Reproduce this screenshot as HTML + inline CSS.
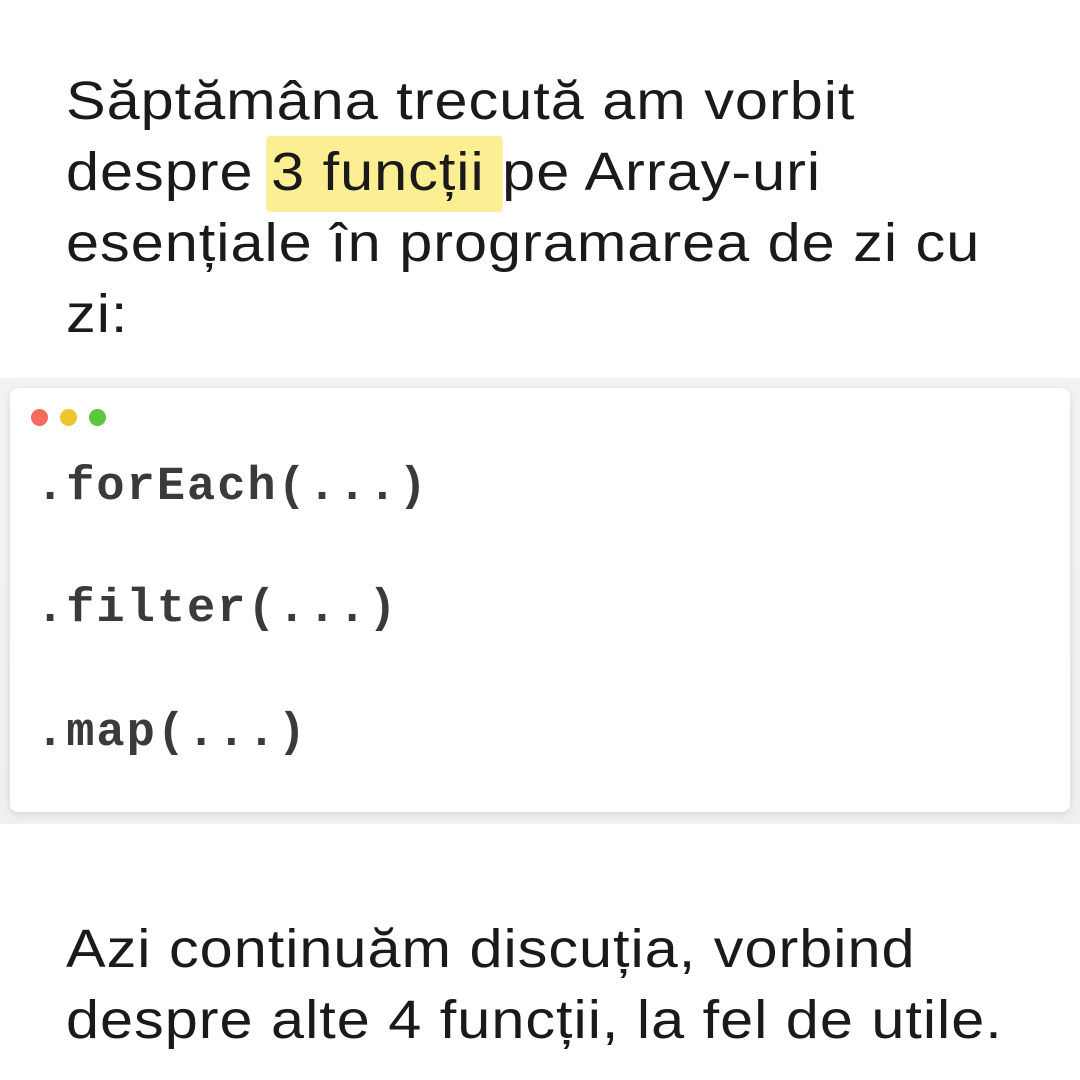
<!DOCTYPE html>
<html><head><meta charset="utf-8"><style>
html,body{margin:0;padding:0;background:#fff;}
body{width:1080px;height:1080px;position:relative;overflow:hidden;font-family:"Liberation Sans",sans-serif;color:#1a1a1a;}
.t{position:absolute;left:66px;font-size:54px;line-height:71px;letter-spacing:0.9px;transform:scaleX(1.1);transform-origin:0 0;white-space:nowrap;}
.hl{background:#fbee93;border-radius:4px;padding:6px 0 10px 4px;margin-left:-4px;}
.band{position:absolute;left:0;top:378px;width:1080px;height:446px;background:linear-gradient(#f3f3f3,#f0f0f0);}
.card{position:absolute;left:10px;top:388px;width:1060px;height:424px;background:#fff;border-radius:8px;box-shadow:0 2px 8px rgba(0,0,0,0.12);}
.dot{position:absolute;top:409px;width:17px;height:17px;border-radius:50%;}
.code{position:absolute;left:36px;font-family:"Liberation Mono",monospace;font-weight:bold;font-size:47px;color:#3a3a3a;letter-spacing:2px;}
</style></head><body>
<div class="t" style="top:66px">Săptămâna trecută am vorbit<br>despre <span class="hl">3 funcții </span>pe Array-uri<br>esențiale în programarea de zi cu<br>zi:</div>
<div class="band"></div>
<div class="card"></div>
<div class="dot" style="left:31px;background:#f76a5c"></div>
<div class="dot" style="left:60px;background:#eec530"></div>
<div class="dot" style="left:89px;background:#5cc63c"></div>
<div class="code" style="top:461px">.forEach(...)</div>
<div class="code" style="top:583px">.filter(...)</div>
<div class="code" style="top:707px">.map(...)</div>
<div class="t" style="top:914px">Azi continuăm discuția, vorbind<br>despre alte 4 funcții, la fel de utile.</div>
</body></html>
